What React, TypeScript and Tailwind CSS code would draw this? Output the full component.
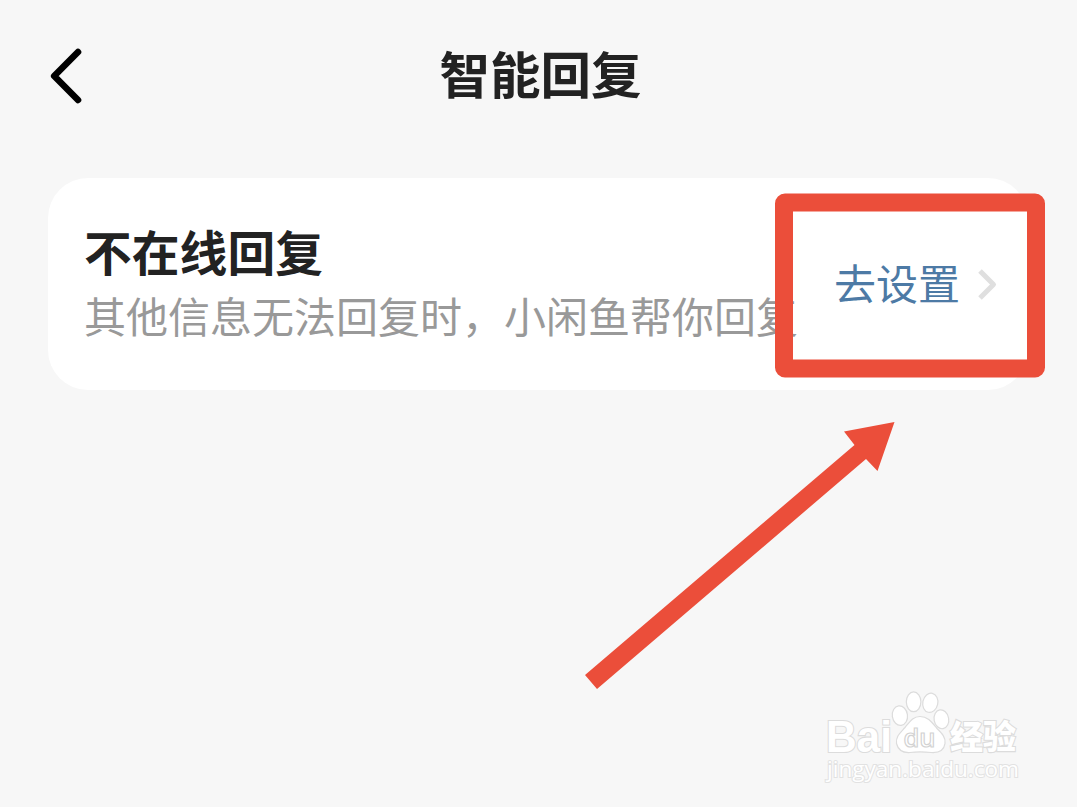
import { type ReactNode } from 'react';

interface SettingRowProps {
  title: string;
  description: string;
  action: ReactNode;
}

function BackIcon() {
  return (
    <svg className="w-9 h-[60px]" viewBox="0 0 36 60" fill="none">
      <path d="M30 7 6.200 31 30 55" stroke="#000" strokeWidth="6.600" strokeLinecap="round" strokeLinejoin="round" />
    </svg>
  );
}

function ChevronIcon() {
  return (
    <svg className="w-6 h-9" viewBox="0 0 24 36" fill="none">
      <path d="M4 5 17.500 18.500 4 32" stroke="#dfdfdf" strokeWidth="5" strokeLinejoin="round" />
    </svg>
  );
}

function Header() {
  return (
    <header className="flex items-center h-[150px] px-12">
      <button className="w-9 shrink-0" aria-label="返回">
        <BackIcon />
      </button>
      <h1 className="flex-1 text-center text-[50.5px] leading-[60px] font-bold text-[#222] pr-8 pb-1.5">智能回复</h1>
    </header>
  );
}

function SettingRow({ title, description, action }: SettingRowProps) {
  return (
    <div className="flex items-center h-[212px] mx-12 w-[980px] pl-9 pr-7 bg-white rounded-[40px]">
      <div className="w-[714px] shrink-0 whitespace-nowrap pb-[3px]">
        <div className="text-[47.8px] leading-[64px] font-bold text-[#222]">{title}</div>
        <div className="text-[42px] leading-[64px] text-[#999]">{description}</div>
      </div>
      <div className="flex-1 flex items-center justify-end">{action}</div>
    </div>
  );
}

// Red frame and arrow drawn over the page
function Annotation() {
  return (
    <svg className="absolute inset-0 w-full h-full pointer-events-none" viewBox="0 0 1077 807" fill="none">
      <rect x="784" y="202.5" width="252" height="166" rx="1" stroke="#eb4e3a" strokeWidth="18" strokeLinejoin="round" />
      <path d="M894.500 422 844 431.500 854.500 445 585 675 597 689 866 459 877.500 471Z" fill="#eb4e3a" />
    </svg>
  );
}

function Watermark() {
  return (
    <svg
      className="absolute left-[815px] top-[685px] w-[220px] h-[110px]"
      viewBox="815 685 220 110"
      fill="#fff"
      stroke="#dcdcdc"
      strokeWidth="1.2"
    >
      <ellipse cx="899.900" cy="715.600" rx="7.600" ry="9.800" transform="rotate(-8 899.9 715.6)" />
      <ellipse cx="913.600" cy="701.800" rx="7.300" ry="9.900" />
      <ellipse cx="930.300" cy="702.800" rx="7.500" ry="9.700" transform="rotate(12 930.3 702.8)" />
      <ellipse cx="941.400" cy="719.300" rx="7.300" ry="9.500" transform="rotate(-10 941.4 719.3)" />
      <path d="M920 716.500c8 0 12 6 17 12 5 5 9 9 8 15-1 7-7 9.500-14 9-8-1-14-1-21 0-7 .5-12-3-13.500-9-1-7 4-11 8.500-16 5-6 8-11 15-11Z" />
      <g paintOrder="stroke" strokeWidth="2.200" className="font-['Liberation_Sans','Noto_Sans_CJK_SC',sans-serif]">
        <text x="826" y="751.500" fontSize="44" fontWeight="700" textLength="66" lengthAdjust="spacingAndGlyphs">Bai</text>
        <text x="950" y="749" fontSize="33.500" fontWeight="900" textLength="66" lengthAdjust="spacingAndGlyphs">经验</text>
      </g>
      <text x="903.500" y="747" fontSize="26" fontWeight="600" stroke="#d2d2d2" textLength="32" lengthAdjust="spacingAndGlyphs" className="font-['Open_Sans',sans-serif]">du</text>
      <text x="827" y="777" fontSize="22" fontWeight="500" stroke="#e2e2e2" paintOrder="stroke" strokeWidth="2" textLength="192" lengthAdjust="spacingAndGlyphs" className="font-['Open_Sans',sans-serif]">jingyan.baidu.com</text>
    </svg>
  );
}

export default function App() {
  return (
    <div className="relative w-[1077px] h-[807px] overflow-hidden bg-[#f7f7f7] font-['Noto_Sans_CJK_SC',sans-serif]">
      <Header />
      <main className="pt-7">
        <SettingRow
          title="不在线回复"
          description="其他信息无法回复时，小闲鱼帮你回复"
          action={
            <button className="flex items-center gap-4 text-[42px] leading-[64px] text-[#4d7aa5] whitespace-nowrap">
              <span className="pb-1">去设置</span>
              <ChevronIcon />
            </button>
          }
        />
      </main>
      <Annotation />
      <Watermark />
    </div>
  );
}
